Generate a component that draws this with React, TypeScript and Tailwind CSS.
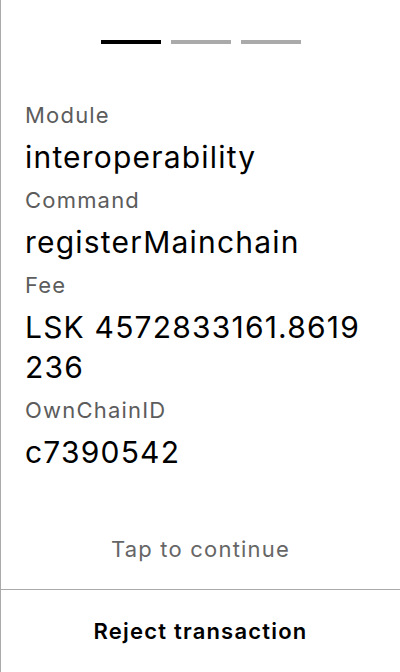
const fields = [
  { label: "Module", value: "interoperability" },
  { label: "Command", value: "registerMainchain" },
  { label: "Fee", value: "LSK 4572833161.8619236" },
  { label: "OwnChainID", value: "c7390542" },
];

export default function App() {
  return (
    <div
      className="h-[672px] w-[400px] flex flex-col bg-white border-l border-[#aaaaaa] tracking-[1.2px]"
      style={{ fontFamily: "Inter, 'Noto Sans', sans-serif" }}
    >
      <div className="flex justify-center gap-[10px] pt-10">
        <div className="h-1 w-[60px] bg-black" />
        <div className="h-1 w-[60px] bg-[#aaaaaa]" />
        <div className="h-1 w-[60px] bg-[#aaaaaa]" />
      </div>

      <div className="flex flex-col gap-[9px] px-6 pt-[57px]">
        {fields.map((f) => (
          <div key={f.label}>
            <div className="text-[22px] leading-7 text-[#5c5c5c]">{f.label}</div>
            <div className="mt-2 text-[30px] leading-10 text-black break-all">{f.value}</div>
          </div>
        ))}
      </div>

      <div className="flex-1" />

      <div className="pb-[26px] text-center text-[22px] leading-7 text-[#666666]">Tap to continue</div>

      <button className="h-[83px] border-t border-[#aaaaaa] text-[22px] font-semibold text-black tracking-[1.2px]">
        Reject transaction
      </button>
    </div>
  );
}
